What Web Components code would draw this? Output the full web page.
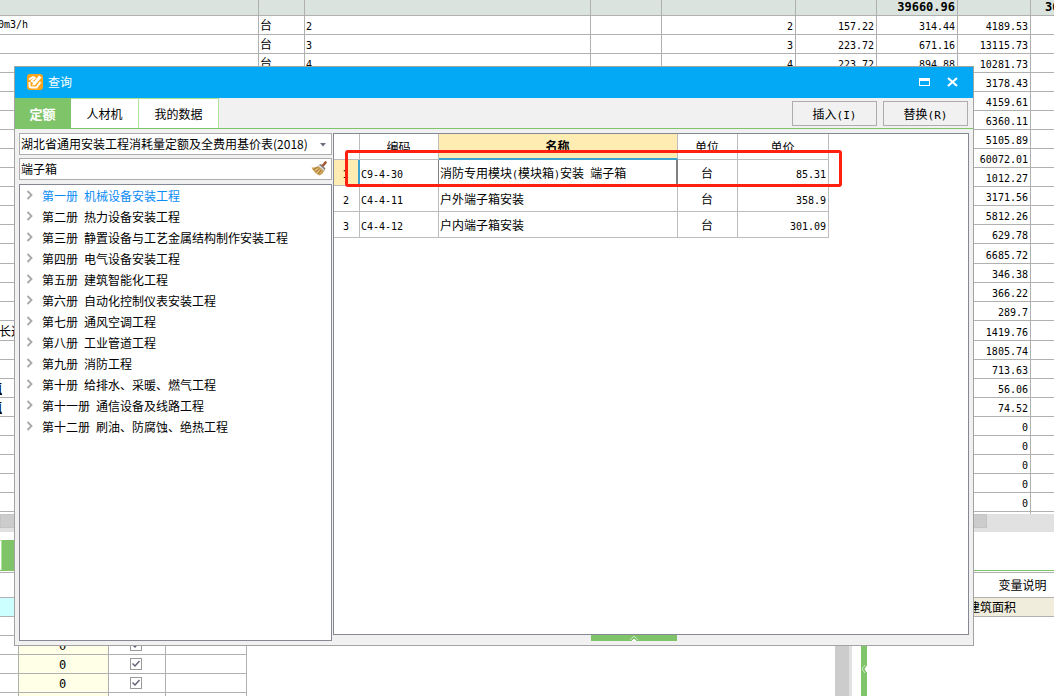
<!DOCTYPE html>
<html lang="zh-CN">
<head>
<meta charset="utf-8">
<title>查询</title>
<style>
html, body { height: 100%; margin: 0; }
body { font: 12px/18px "Noto Sans CJK SC", sans-serif; color: #000; background: #fff; overflow: hidden; }
</style>
</head>
<body>
<cost-app></cost-app>
<script>
/* Half-width runs are set in a monospace face so that columns of figures line up. */
const t = s => String(s).replace(/[\x20-\x7e]+/g, m => `<span class="n">${m}</span>`);
const shared = `
*{box-sizing:border-box}
.n{font-family:"DejaVu Sans Mono",monospace;font-size:10px;line-height:1;white-space:pre}
button,input,select{font:inherit;color:inherit;margin:0;padding:0;border:0;background:none;border-radius:0}
table{border-collapse:separate;border-spacing:0;table-layout:fixed}
th,td{padding:0 2px 0 1px;font-weight:normal;text-align:left;white-space:nowrap;overflow:hidden;border:solid #b0b0b0;border-width:0 1px 1px 0}
`;
class Base extends HTMLElement {
  constructor() {
    super();
    this.attachShadow({ mode: 'open' }).innerHTML = `<style>${shared}${this.css()}</style>${this.html()}`;
  }
}

/* Main price sheet behind the dialog */
customElements.define('price-sheet', class extends Base {
  css() { return `
:host{display:block;height:514px;overflow:hidden;flex:none}
table{width:1121px}
th{height:15px;line-height:12px;padding-bottom:2px}
th{background:#dae3de}
th .n{font-weight:bold;font-size:12px}
td{height:19px;line-height:16px}
tr.tall td{height:20px}
.r{text-align:right;padding-right:2px}
.next{padding-left:14px}
.cut{display:block;margin-left:-11px}
.cut.b{font-weight:bold;text-decoration:underline}
.cut.m{margin-left:-3px;line-height:16px}
.cut.c{margin-left:-2px}
tr.last td{height:4px;border-bottom:0}`; }
  html() {
    const w = [259, 46, 286, 71, 134, 81, 81, 73, 90];
    const rows = [
      ['<span class="cut m n">0m3/h</span>', '台', 2, '', 2, '157.22', '314.44', '4189.53'],
      ['', '台', 3, '', 3, '223.72', '671.16', '13115.73'],
      ['', '台', 4, '', 4, '223.72', '894.88', '10281.73']
    ];
    ['3178.43', '4159.61', '6360.11', '5105.89', '60072.01', '1012.27', '3171.56', '5812.26', '629.78', '6685.72',
     '346.38', '366.22', '289.7', '1419.76', '1805.74', '713.63', '56.06', '74.52', '0', '0', '0', '0', '0']
      .forEach(v => rows.push(['', '', '', '', '', '', '', v]));
    rows[16][0] = '<span class="cut c">长近</span>';
    rows[19][0] = rows[20][0] = '<span class="cut b">值</span>';
    return `<table><colgroup>${w.map(x => `<col style="width:${x}px">`).join('')}</colgroup>
<thead><tr><th></th><th></th><th></th><th></th><th></th><th></th><th class="r">${t('39660.96')}</th><th></th><th class="next">${t('30')}</th></tr></thead>
<tbody>${rows.map((r, i) => `<tr${i === 12 || i === 16 ? ' class="tall"' : ''}>${r.map((c, j) =>
      `<td${j > 3 ? ' class="r"' : ''}>${j ? t(c) : c}</td>`).join('')}<td></td></tr>`).join('')}
<tr class="last">${'<td></td>'.repeat(9)}</tr></tbody></table>`;
  }
});

/* Lower part: quantity table, splitter and variable list */
customElements.define('detail-panes', class extends Base {
  css() { return `
:host{display:flex;flex:1;min-height:0;overflow:hidden;border-top:1px solid #b0b0b0}
.left{flex:1;overflow:hidden}
.left table{width:247px}
th{height:25px}
td{height:19px;line-height:16px}
.left td{text-align:center;padding-right:3px}
.left .n{font-size:12px}
.q{background:#fffee6}
tr:first-child td.k{background:#ccffff}
input{appearance:none;display:block;width:12px;height:12px;margin:0 auto;border:1px solid #9a9a9a;
background:#fff url('data:image/svg+xml,<svg xmlns="http://www.w3.org/2000/svg" viewBox="0 0 10 10"><path d="M1.5 4.5 4 7l4.500-5" fill="none" stroke="%23606078" stroke-width="1.400"/></svg>')}
.bar{width:17px;background:#e1e1e1;border-left:14px solid #ccc}
.split{width:6px;margin-left:9px;background:#7fc469;display:flex;align-items:center;padding-top:68px}
.right{width:187px;overflow:hidden}
.right table{width:213px}
.right th{text-align:center}
.right td{background:#f0eddd}`; }
  html() {
    const row = i => `<tr><td class="k"></td><td class="q">${t('0')}</td><td><input type="checkbox" checked aria-label="第${i}行"></td><td></td></tr>`;
    return `<div class="left"><table><colgroup><col style="width:19px"><col style="width:90px"><col style="width:57px"><col style="width:81px"></colgroup>
<thead><tr><th></th><th></th><th></th><th></th></tr></thead><tbody>${[1, 2, 3, 4, 5, 6].map(row).join('')}</tbody></table></div>
<div class="bar"></div>
<div class="split"><svg width="6" height="10" viewBox="0 0 6 10" fill="none" stroke="#fff"><path d="M4 1 1 5l3 4" opacity=".6"/><path d="M6 2 4 5l2 3z" fill="#fff"/></svg></div>
<div class="right"><table><colgroup><col style="width:100px"><col style="width:113px"></colgroup>
<thead><tr><th></th><th>变量说明</th></tr></thead><tbody><tr><td></td><td>建筑面积</td></tr></tbody></table></div>`;
  }
});

/* Book tree with its filter fields */
customElements.define('quota-tree', class extends Base {
  css() { return `
:host{display:flex;flex-direction:column;gap:3px;width:313px;flex:none}
.field{position:relative;display:flex;height:22px;border:1px solid #adadad;background:#fff}
.field svg{position:absolute;pointer-events:none}
.arrow{right:4px;top:9px}
.field button{position:absolute;right:3px;top:2px;width:17px;height:17px}
.field button svg{left:0;top:0}
select,input{appearance:none;width:100%;outline:0;padding:0 1px}
ul{flex:1;margin:1px 0 0;padding:0;list-style:none;border:1px solid #868994;background:#fff}
li button{display:flex;align-items:center;height:21px;width:100%;padding-left:6px;gap:9px;text-align:left;white-space:nowrap}
li svg{margin-bottom:2px}
li:first-child button span.t{color:#0a8cf5}`; }
  html() {
    const items = ['第一册 机械设备安装工程', '第二册 热力设备安装工程', '第三册 静置设备与工艺金属结构制作安装工程', '第四册 电气设备安装工程',
      '第五册 建筑智能化工程', '第六册 自动化控制仪表安装工程', '第七册 通风空调工程', '第八册 工业管道工程', '第九册 消防工程',
      '第十册 给排水、采暖、燃气工程', '第十一册 通信设备及线路工程', '第十二册 刷油、防腐蚀、绝热工程'];
    return `<div class="field"><select aria-label="定额库"><option>湖北省通用安装工程消耗量定额及全费用基价表(2018)</option></select>
<svg class="arrow" width="7" height="4" viewBox="0 0 7 4"><path d="M0 0h6L3 3.500z" fill="#6e6e80"/></svg></div>
<div class="field"><input type="text" value="端子箱" aria-label="搜索"><button aria-label="清除">
<svg width="17" height="17" viewBox="0 0 17 17"><path d="m14.500 1.500-2.500 3" fill="none" stroke="#a45532" stroke-width="2.600" stroke-linecap="round"/><path d="M7.500 4 10 3l4.500 4.500-1.500 3z" fill="#8a7b70"/><path d="m8 4.500 5.500 5" stroke="#d9e1ea" stroke-width="1.300"/><path d="M7.500 5C5 6 3 6.500 .5 6.500 2 10 5 13 8.500 14.500c2-1 4-2.500 4.500-4.500z" fill="#cfa25a"/><path d="M7 6 2.500 8.500M8.500 7.500 4.500 11M10 9l-3 4.500" stroke="#96702f" stroke-width=".8"/><path d="m7.500 7-3.500 2.500M9 8.500 6 12" stroke="#f0cf86" stroke-width=".8"/></svg></button></div>
<ul>${items.map(s => `<li><button><svg width="7" height="10" viewBox="0 0 7 10"><path d="m1.500 1 4 4-4 4" fill="none" stroke="#a8a8a8" stroke-width="1.800"/></svg><span class="t">${t(s)}</span></button></li>`).join('')}</ul>`;
  }
});

/* Search results */
customElements.define('result-table', class extends Base {
  css() { return `
:host{display:flex;flex-direction:column;flex:1;min-width:0}
.panel{position:relative;flex:1;border:1px solid #868994;background:#fff}
table{width:495px}
th,td{height:26px;border-color:#bdbdbd}
th{text-align:center}
th.on{background:#ffecb3;font-weight:bold;border-bottom:2px solid #3ba3d0}
td:first-child,.c{text-align:center}
.r{text-align:right}
tr.sel td:first-child{background:#ffecb3;border-right:2px solid #3ba3d0}
tr.sel td:nth-child(3){border-right:2px solid #808080}
tr.sel td:nth-child(2){border-right-color:#808080}
.mark{position:absolute;left:11px;top:16px;width:497px;height:37px;border:3px solid #ff2010;border-radius:3px;pointer-events:none}
.foot{display:flex;justify-content:center;padding-right:34px}
.foot button{display:flex;justify-content:center;width:86px;height:6px;background:#7fc469}`; }
  html() {
    const rows = [['C9-4-30', '消防专用模块(模块箱)安装 端子箱', '85.31'], ['C4-4-11', '户外端子箱安装', '358.9'], ['C4-4-12', '户内端子箱安装', '301.09']];
    return `<div class="panel"><table><colgroup>${[26, 79, 239, 60, 91].map(x => `<col style="width:${x}px">`).join('')}</colgroup>
<thead><tr><th></th><th>编码</th><th class="on">名称</th><th>单位</th><th>单价</th></tr></thead>
<tbody>${rows.map((r, i) => `<tr${i ? '' : ' class="sel"'}><td>${t(i + 1)}</td><td>${t(r[0])}</td><td>${t(r[1])}</td><td class="c">台</td><td class="r">${t(r[2])}</td></tr>`).join('')}</tbody></table>
<div class="mark"></div></div>
<div class="foot"><button aria-label="展开"><svg width="10" height="6" viewBox="0 0 10 6" fill="none" stroke="#fff"><path d="m1 5 4-4 4 4" opacity=".6"/><path d="m3 6 2-2 2 2z" fill="#fff"/></svg></button></div>`;
  }
});

/* Dialog frame */
customElements.define('query-dialog', class extends Base {
  css() { return `
:host{display:flex;flex-direction:column;border:1px solid #a3a3a3;background:#f1f1f1}
header{display:flex;align-items:center;height:31px;padding:0 13px 2px 12px;background:#03a9f4;color:#fff}
header .title{flex:1;margin-left:5px}
header button{display:flex;margin-left:16px}
nav{display:flex;height:31px;border-bottom:1px solid #7fc469}
nav .tab{border:solid #aee39b;border-width:1px 1px 0 0;background:#fff}
nav .one{width:56px;background:#7fc469;border-color:#7fc469;color:#fff;font-weight:bold;font-size:13px}
nav .two{width:68px}
nav .three{width:80px}
.acts{margin-left:auto;display:flex;gap:6px;padding:3px 5px 0 0}
.acts button{width:85px;height:25px;border:1px solid #adadad}
.acts .n{font-size:11px}
.body{display:flex;flex:1;gap:1px;padding:4px}
`; }
  html() { return `<header>
<svg width="16" height="16" viewBox="0 0 16 16"><rect width="16" height="16" rx="3" fill="#ffa61c"/><path d="M2 5.500 6 3l2 1-3.500 3L8 9l4.500-5" fill="none" stroke="#fff" stroke-width="1.800" stroke-linejoin="round"/><path d="m12 1.500 2.500 2L8 11l-3 .5L6 9z" fill="#fff"/><path d="M2.500 8v3.500q0 2 2 2h5L13.500 8" fill="none" stroke="#fff" stroke-width="2"/></svg>
<span class="title">查询</span>
<button aria-label="最大化"><svg width="11" height="8" viewBox="0 0 11 8"><path d="M0 0h11v8H0zM1 3v4h9V3z" fill="#fff" fill-rule="evenodd"/></svg></button>
<button aria-label="关闭"><svg width="14" height="10" viewBox="0 0 14 10"><path d="m2 1 9 8M11 1 2 9" stroke="#fff" stroke-width="2.200"/></svg></button></header>
<nav><button class="tab one">定额</button><button class="tab two">人材机</button><button class="tab three">我的数据</button>
<div class="acts"><button>${t('插入(I)')}</button><button>${t('替换(R)')}</button></div></nav>
<div class="body"><quota-tree></quota-tree><result-table></result-table></div>`; }
});

customElements.define('cost-app', class extends Base {
  css() { return `
:host{position:relative;display:flex;flex-direction:column;height:100%;overflow:hidden}
.scroll{flex:none;height:18px;background:#e1e1e1}
.scroll i{display:block;width:987px;height:14px;background:#ccc;border:1px solid #c4c4c4}
.tabs{flex:none;display:flex;height:31px;margin:8px 0 1px;border-bottom:1px solid #7fc469}
.tabs i{width:2px;border:solid #aee39b;border-width:1px 1px 0 0}
.tabs b{width:60px;background:#7fc469}
query-dialog{position:absolute;inset:66px 80px 50px 14px}`; }
  html() { return `<price-sheet></price-sheet><div class="scroll"><i></i></div><div class="tabs"><i></i><b></b></div>
<detail-panes></detail-panes><query-dialog></query-dialog>`; }
});
</script>
</body>
</html>
